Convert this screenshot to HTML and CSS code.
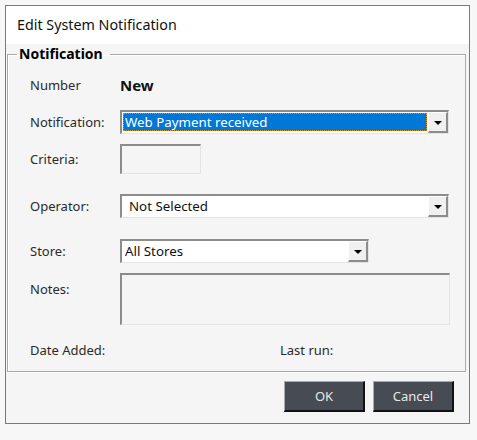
FILE: index.html
```html
<!DOCTYPE html>
<html>
<head>
<meta charset="utf-8">
<link rel="stylesheet" href="styles.css">
</head>
<body>
<div class="window">
  <div class="titlebar">Edit System Notification</div>
  <div class="client">
    <fieldset class="group">
      <legend>Notification</legend>
      <div class="form">
        <div class="row r-number">
          <span class="label">Number</span>
          <span class="big">New</span>
        </div>
        <div class="row r-notif">
          <span class="label">Notification:</span>
          <div class="combo wide">
            <span class="value selected"><span class="focus">Web Payment received</span></span>
            <span class="drop"><span class="arrow"></span></span>
          </div>
        </div>
        <div class="row r-criteria">
          <span class="label">Criteria:</span>
          <div class="textbox criteria"></div>
        </div>
        <div class="row r-operator">
          <span class="label">Operator:</span>
          <div class="combo wide">
            <span class="value pad-op">Not Selected</span>
            <span class="drop"><span class="arrow"></span></span>
          </div>
        </div>
        <div class="row r-store">
          <span class="label">Store:</span>
          <div class="combo store">
            <span class="value">All Stores</span>
            <span class="drop"><span class="arrow"></span></span>
          </div>
        </div>
        <div class="row r-notes">
          <span class="label top">Notes:</span>
          <div class="textbox notes"></div>
        </div>
        <div class="row r-dates">
          <span class="label">Date Added:</span>
          <span class="label lastrun">Last run:</span>
        </div>
      </div>
    </fieldset>
    <div class="buttons">
      <button class="btn">OK</button>
      <button class="btn">Cancel</button>
    </div>
  </div>
</div>
</body>
</html>
```

FILE: styles.css
```css
html, body {
  margin: 0;
  padding: 0;
  background: #f7f7f7;
}
body {
  padding: 5px;
  font-family: "Noto Sans", "Open Sans", sans-serif;
  color: #1e1e1e;
}
.window {
  width: 463px;
  height: 417px;
  border: 1px solid #7a7a7a;
  background: #f5f5f5;
  display: flex;
  flex-direction: column;
}
.titlebar {
  height: 38px;
  background: #ffffff;
  padding-left: 11px;
  font-size: 14.3px;
  line-height: 38px;
  color: #111;
}
.client {
  flex: 1;
  display: flex;
  flex-direction: column;
}
.group {
  margin: 1px 3px 0 1px;
  padding: 0;
  height: 325px;
  flex: none;
  border: 1px solid #a9a9a9;
  box-shadow: inset 1px 1px 0 #ffffff, 0 1px 0 #ffffff;
  min-width: 0;
}
.group legend {
  margin-left: 9px;
  padding: 0 7px 0 2px;
  font-weight: bold;
  font-size: 14px;
  line-height: 18px;
  color: #000;
}
.form {
  padding: 10px 0 0 22px;
  display: flex;
  flex-direction: column;
}
.row {
  display: flex;
  align-items: center;
}
.label {
  width: 90px;
  flex: none;
  font-size: 13px;
  color: #2a2a2a;
}
.label.top {
  align-self: flex-start;
  padding-top: 7px;
}
.lastrun {
  margin-left: 160px;
}
.r-number { height: 24px; }
.r-notif { height: 24px; margin-top: 13px; }
.r-criteria { height: 30px; margin-top: 10px; }
.r-operator { height: 24px; margin-top: 20px; }
.r-store { height: 24px; margin-top: 21px; }
.r-notes { height: 52px; margin-top: 10px; }
.r-dates { height: 22px; margin-top: 14px; }
.big {
  font-weight: bold;
  font-size: 15px;
  color: #111;
}
.combo {
  box-sizing: border-box;
  height: 24px;
  display: flex;
  background: #ffffff;
  border-top: 2px solid #8c8c8c;
  border-left: 2px solid #8c8c8c;
  border-bottom: 1px solid #e4e4e4;
  border-right: 1px solid #e4e4e4;
}
.combo.wide { width: 329px; }
.combo.store { width: 249px; }
.value {
  flex: 1;
  font-size: 13.3px;
  line-height: 21px;
  padding-left: 3px;
  color: #111;
  white-space: nowrap;
  overflow: hidden;
}
.value.pad-op { padding-left: 7px; }
.value.selected {
  padding: 1px 1px 2px 1px;
  display: flex;
}
.focus {
  flex: 1;
  background: #0078d7;
  color: #ffffff;
  border: 1px dotted #d98a2b;
  line-height: 16px;
  padding-left: 1px;
}
.drop {
  box-sizing: border-box;
  width: 20px;
  flex: none;
  background: #f0f0f0;
  border-top: 1px solid #ffffff;
  border-left: 1px solid #ffffff;
  border-right: 2px solid #8c8c8c;
  border-bottom: 2px solid #8c8c8c;
  display: flex;
  align-items: center;
  justify-content: center;
}
.arrow {
  width: 0;
  height: 0;
  border-left: 4px solid transparent;
  border-right: 4px solid transparent;
  border-top: 4px solid #000;
  margin-top: 1px;
}
.textbox {
  box-sizing: border-box;
  background: #f5f5f5;
  border-top: 2px solid #8c8c8c;
  border-left: 2px solid #8c8c8c;
  border-bottom: 1px solid #e4e4e4;
  border-right: 1px solid #e4e4e4;
}
.criteria { width: 81px; height: 30px; }
.notes { width: 330px; height: 52px; align-self: flex-start; }
.buttons {
  display: flex;
  justify-content: flex-end;
  gap: 8px;
  padding-right: 15px;
  margin-top: 9px;
}
.btn {
  box-sizing: border-box;
  width: 81px;
  height: 31px;
  background: #474b53;
  color: #e8e8e8;
  font-family: "Noto Sans", "Open Sans", sans-serif;
  font-size: 13px;
  border-top: 1px solid #a9abaf;
  border-left: 1px solid #a9abaf;
  border-right: 2px solid #111111;
  border-bottom: 2px solid #111111;
  padding: 0;
}
```
